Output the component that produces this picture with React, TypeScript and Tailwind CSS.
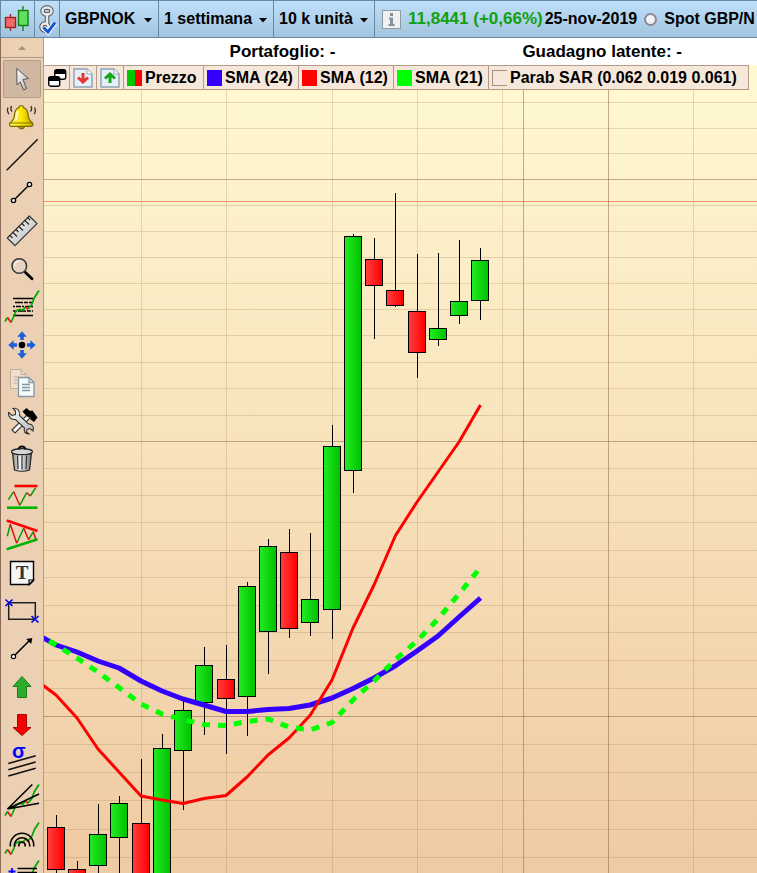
import React from "react";

type Candle = {
  x: number;
  high: number;
  top: number;
  bottom: number;
  low: number;
  up: boolean;
};

const candles: Candle[] = [
  { x: 56, high: 815, top: 827, bottom: 870, low: 900, up: false },
  { x: 77, high: 861, top: 869, bottom: 900, low: 910, up: false },
  { x: 98, high: 804, top: 834, bottom: 866, low: 890, up: true },
  { x: 119, high: 796, top: 803, bottom: 838, low: 890, up: true },
  { x: 141, high: 759, top: 823, bottom: 900, low: 910, up: false },
  { x: 162, high: 734, top: 748, bottom: 900, low: 910, up: true },
  { x: 183, high: 701, top: 710, bottom: 751, low: 810, up: true },
  { x: 204, high: 647, top: 665, bottom: 703, low: 735, up: true },
  { x: 226, high: 645, top: 679, bottom: 699, low: 754, up: false },
  { x: 247, high: 582, top: 586, bottom: 697, low: 736, up: true },
  { x: 268, high: 539, top: 546, bottom: 632, low: 674, up: true },
  { x: 289, high: 529, top: 552, bottom: 629, low: 638, up: false },
  { x: 310, high: 533, top: 599, bottom: 623, low: 636, up: true },
  { x: 332, high: 425, top: 446, bottom: 610, low: 639, up: true },
  { x: 353, high: 234, top: 236, bottom: 471, low: 493, up: true },
  { x: 374, high: 238, top: 259, bottom: 286, low: 339, up: false },
  { x: 395, high: 193, top: 290, bottom: 306, low: 307, up: false },
  { x: 417, high: 254, top: 311, bottom: 353, low: 378, up: false },
  { x: 438, high: 253, top: 328, bottom: 340, low: 346, up: true },
  { x: 459, high: 240, top: 301, bottom: 316, low: 324, up: true },
  { x: 480, high: 248, top: 260, bottom: 301, low: 320, up: true },
];

const sma24 =
  "40,636 56,645 77,652 98,661 119,668 141,681 162,691 183,699 204,705 226,711.5 247,711.5 268,709.5 289,708.5 310,705 332,698 353,688.5 374,678 395,666 417,651 438,636 459,617 480.5,598";
const sma12 =
  "40,683 56,695 77,718 98,749 119,772 141,796 162,800 183,803.5 204,798.5 226,795.5 247,777 268,755 289,738 310,715.5 332,680 353,628 374,585 395.5,535.5 417,502 438,472 459,442 480.5,405";
const sma21 =
  "44,638 56,645 77,658 98,672 119,687.5 141,704 162,714 183,719.5 204,724.5 226,725.5 247,721.5 268,719 289,727 310,730 332,722.5 353,700 374,681 395,660 417,641 438,619 459,594 480,568";

const minorRows = [
  102, 128, 153, 205, 231, 257, 283, 309, 335, 362, 388, 415, 468, 495, 522,
  550, 577, 605, 632, 660, 688, 744, 772, 800, 829, 857,
];
const majorRows = [179, 441, 716];
const minorCols = [141, 226, 332, 417, 502, 693];

function Chart() {
  return (
    <svg className="absolute inset-0 h-full w-full" role="img" aria-label="GBPNOK">
      <defs>
        <linearGradient id="up">
          <stop offset="0" stopColor="#22ea22" />
          <stop offset="1" stopColor="#00c200" />
        </linearGradient>
        <linearGradient id="down">
          <stop offset="0" stopColor="#ff3e3e" />
          <stop offset="1" stopColor="#ff0000" />
        </linearGradient>
      </defs>
      <g transform="translate(-44 -65)">
        <g shapeRendering="crispEdges">
          {minorRows.map((y) => (
            <rect key={y} x="44" y={y} width="100%" height="1" fill="#a07850" fillOpacity="0.25" />
          ))}
          {minorCols.map((x) => (
            <rect key={x} x={x} y="65" width="1" height="100%" fill="#a07850" fillOpacity="0.25" />
          ))}
          {majorRows.map((y) => (
            <rect key={y} x="44" y={y} width="100%" height="1" fill="#8c5f3c" fillOpacity="0.5" />
          ))}
          <rect x="608" y="65" width="1" height="100%" fill="#8c5f3c" fillOpacity="0.5" />
          <rect x="523" y="65" width="1" height="100%" fill="#ff3c32" fillOpacity="0.55" />
          <rect x="44" y="201" width="100%" height="1" fill="#ff3c32" fillOpacity="0.55" />
          {candles.map((c) => (
            <g key={c.x}>
              <rect x={c.x} y={c.high} width="1" height={c.low - c.high} fill="#000" />
              <rect x={c.x - 9} y={c.top} width="18" height={c.bottom - c.top} fill="#000" />
              <rect
                x={c.x - 8}
                y={c.top + 1}
                width="16"
                height={c.bottom - c.top - 2}
                fill={c.up ? "url(#up)" : "url(#down)"}
              />
            </g>
          ))}
        </g>
        <g fill="none" strokeLinejoin="round">
          <polyline points={sma24} stroke="#3300ff" strokeWidth="5" />
          <polyline points={sma12} stroke="#ff0000" strokeWidth="3" />
          <polyline points={sma21} stroke="#00ff00" strokeWidth="5" strokeDasharray="8 8" strokeDashoffset="-6" />
        </g>
      </g>
    </svg>
  );
}

function Zigzag() {
  return (
    <g fill="none" strokeWidth="1.7">
      <path d="M2 33.5 4.5 29.5M8 34.5 11 28 13 23 16.5 21.5 20 22 22.5 19M25 21 28.5 17 31.5 9.5 36 2.5" stroke="#00a800" />
      <path d="M4.5 29.5 8 34.5M22.5 18.5 25 21.5" stroke="#f01010" />
    </g>
  );
}

const tools: { label: string; icon: React.ReactNode }[] = [
  {
    label: "Puntatore",
    icon: (
      <path
        d="M13.7 8.5 25.5 18.5 20 19.5 23.5 28.5 20.5 30 17.3 22 14 25Z"
        fill="url(#steel)"
        stroke="#555"
        strokeWidth="1"
      />
    ),
  },
  {
    label: "Allarme",
    icon: (
      <>
        <path d="M15.5 28a3 3 0 0 0 6 0z" fill="#b39a00" stroke="#6b5a00" />
        <path
          d="M18.3 7.5c1.5 0 2 1 2 2 3 1 4.5 3.5 4.7 7 .3 4 1 6 4.5 8.5.8.8.8 3-1 3.3H8c-1.8-.3-1.8-2.5-1-3.3 3.5-2.5 4.3-4.5 4.5-8.5.2-3.5 1.8-6 4.8-7 0-1 .5-2 2-2z"
          fill="url(#gold)"
          stroke="#7a6800"
          strokeWidth="1.2"
        />
        <path d="M7 25h23" stroke="#8a7600" />
        <path d="M15 13c-1 2-1 6-2 9" stroke="#fffbd0" strokeWidth="2" fill="none" />
        <path
          d="M5 9.5Q3.5 13 6 16M8.5 8Q7 11 9 13.5M31.5 9.5Q33.5 13 31 16M28 8Q29.5 11 27.5 13.5"
          fill="none"
          stroke="#333"
          strokeWidth="1.3"
        />
      </>
    ),
  },
  { label: "Linea", icon: <path d="M3.7 34.3 34.7 3.3" stroke="#111" strokeWidth="1.4" /> },
  {
    label: "Segmento",
    icon: (
      <g stroke="#000" fill="#fff" strokeWidth="1.4">
        <path d="M10.5 26.5 26.5 10.5" />
        <circle cx="10.5" cy="26.5" r="2.1" />
        <circle cx="26.5" cy="10.5" r="2.1" />
      </g>
    ),
  },
  {
    label: "Righello",
    icon: (
      <>
        <path d="M26.3 4 34 11.7 12 33.7 4.3 26Z" fill="url(#steel)" stroke="#333" strokeWidth="1.2" strokeLinejoin="round" />
        <path
          d="M7 23.5l2.5 2.5M10 20.5l4 4M13 17.5l2.5 2.5M16 14.5l4 4M19 11.5l2.5 2.5M22 8.5l4 4M25 6l2.2 2.2"
          stroke="#222"
          strokeWidth="1.1"
        />
      </>
    ),
  },
  {
    label: "Zoom",
    icon: (
      <>
        <path d="M22.5 22.5 29 28.8" stroke="#000" strokeWidth="2.8" strokeLinecap="round" />
        <circle cx="16.3" cy="16" r="7.3" fill="#e6d3c0" stroke="#333" strokeWidth="1.5" />
        <path d="M11.5 15.5a5 5 0 0 1 5-4.5" stroke="#fff" strokeWidth="1.2" fill="none" />
      </>
    ),
  },
  {
    label: "Livelli",
    icon: (
      <>
        <path d="M10 10.5H30M10 27.5H30" stroke="#000" strokeWidth="1.6" />
        <path d="M12 14.5H30" stroke="#000" strokeWidth="1.6" strokeDasharray="8 1 4 1" />
        <path d="M10 18.5H30" stroke="#000" strokeWidth="1.6" strokeDasharray="2 1 5 1" />
        <path d="M10 23H30" stroke="#000" strokeWidth="1.6" strokeDasharray="4 1 8 1" />
        <Zigzag />
      </>
    ),
  },
  {
    label: "Sposta",
    icon: (
      <>
        <circle cx="19" cy="19" r="3.3" fill="#000" />
        <path
          d="M19 5.3 23.7 10.7H20.8V14H17.2V10.7H14.3ZM19 32.7 23.7 27.3H20.8V24H17.2V27.3H14.3ZM5.3 19 10.7 14.3V17.2H14V20.8H10.7V23.7ZM32.7 19 27.3 14.3V17.2H24V20.8H27.3V23.7Z"
          fill="#1a5fd8"
        />
      </>
    ),
  },
  {
    label: "Copia",
    icon: (
      <>
        <path d="M7.5 5.5H18L23 10.5V24.5H7.5Z" fill="#f1dfcc" stroke="#bfae9e" />
        <path d="M18 5.5V10.5H23M10.5 13h6M10.5 16h4M10.5 19h4" stroke="#bfae9e" fill="none" />
        <path d="M15.5 13.5H26L31 18.5V32.5H15.5Z" fill="#f7fafc" stroke="#8496a2" strokeWidth="1.3" />
        <path d="M26 13.5V18.5H31M19 20.5h8M19 23.5h8M19 26.5h8" stroke="#8496a2" strokeWidth="1.3" fill="none" />
      </>
    ),
  },
  {
    label: "Strumenti",
    icon: (
      <>
        <path d="M9 28 24 13 27 16 12 31Z" fill="#fff" stroke="#333" strokeWidth="1.1" />
        <path d="M19.5 9.5 23.5 6 27 9 29.5 8.5 34.5 15.5 31 20 27.5 17.5 27 15 24 14.5Z" fill="#000" />
        <path
          d="M5.5 10.5 9 13.5 12.5 12.5 12.5 9 10 6.5C14 5.5 17.5 9 16.5 13.5L25.5 22C29 21.5 31.5 25 30 29L27 26.5 24 27.5 23.5 30 26 32C21.5 32 20.5 29 21.5 26L12.5 17.5C8.500 18 5 15 5.5 10.5Z"
          fill="url(#steel)"
          stroke="#333"
          strokeWidth="1.1"
        />
      </>
    ),
  },
  {
    label: "Elimina",
    icon: (
      <>
        <path d="M9.5 13 11.5 30Q19 32.5 26.5 30L28.5 13Z" fill="url(#metal)" stroke="#222" strokeWidth="1.2" />
        <path d="M14.5 15.5 15 29M19 15.5V29.5M23.5 15.5 23 29" stroke="#333" strokeWidth="1.2" />
        <ellipse cx="19" cy="11.7" rx="10.5" ry="3" fill="#d6d6d6" stroke="#222" strokeWidth="1.2" />
        <path d="M15.5 9.5Q16 6.5 19 6.5T22.5 9.5" fill="none" stroke="#111" strokeWidth="2" />
      </>
    ),
  },
  {
    label: "Canale orizzontale",
    icon: (
      <g fill="none" strokeWidth="1.5">
        <path d="M11.5 8H34.5" stroke="#f00" strokeWidth="2.6" />
        <path d="M4 29.7H34.5" stroke="#00b400" strokeWidth="2.6" />
        <path d="M5.3 21.7 10.7 13.7M16.7 27.3 23.7 14.7M27.3 18 32.7 9.7" stroke="#00a000" />
        <path d="M10.7 13.7 16.7 27.3M23.7 14.7 27.3 18" stroke="#e01010" />
      </g>
    ),
  },
  {
    label: "Triangolo",
    icon: (
      <g fill="none" strokeWidth="1.5">
        <path d="M3.7 4.5 34.5 15" stroke="#f00" strokeWidth="2.6" />
        <path d="M3.7 33.3 34.5 23.3" stroke="#00b400" strokeWidth="2.6" />
        <path d="M4.3 20.3 7.3 8.3M13.7 27.3 20.7 12.3M25.7 23.7 30.3 15.7" stroke="#00a000" />
        <path d="M7.3 8.3 13.7 27.3M20.7 12.3 25.7 23.7M30.3 15.7 32.7 23" stroke="#e01010" />
      </g>
    ),
  },
  {
    label: "Testo",
    icon: (
      <>
        <path d="M7.5 7.5H30.5V26.5L26.5 30.5H7.5Z" fill="#f6f6f6" stroke="#000" strokeWidth="1.4" />
        <path d="M26 30.5V26H30.5Z" fill="#fff" stroke="#000" strokeWidth="1.2" />
        <text x="19" y="25" textAnchor="middle" fontFamily="Liberation Serif, serif" fontWeight="bold" fontSize="19" fill="#333">
          T
        </text>
      </>
    ),
  },
  {
    label: "Rettangolo",
    icon: (
      <>
        <path d="M5.7 10.7H32.3V27.3H5.7Z" fill="none" stroke="#222" strokeWidth="1.5" />
        <path d="M2.5 7.5 9.5 14M9.5 7.5 2.5 14M28.5 24 35.5 30.5M35.5 24 28.5 30.5" stroke="#0000f0" strokeWidth="1.7" />
      </>
    ),
  },
  {
    label: "Freccia",
    icon: (
      <>
        <path d="M10.5 26.5 27 10" stroke="#000" strokeWidth="1.6" />
        <path d="M29.3 8 28.2 14 23.2 9Z" fill="#000" />
        <circle cx="10.5" cy="26.5" r="2.1" fill="#fff" stroke="#000" strokeWidth="1.2" />
      </>
    ),
  },
  {
    label: "Freccia su",
    icon: <path d="M19 8.5 28 18.5H23.5V29.5H14.5V18.5H10Z" fill="#2cae2c" stroke="#1a7a1a" />,
  },
  {
    label: "Freccia giù",
    icon: <path d="M14.5 8.5H23.5V21.5H28L19 29.5 10 21.5H14.5Z" fill="#f50000" stroke="#b00000" />,
  },
  {
    label: "Deviazione",
    icon: (
      <>
        <text x="9" y="14" fontFamily="Liberation Sans, sans-serif" fontWeight="bold" fontSize="20" fill="#0000ff">
          σ
        </text>
        <path d="M5.3 19.5 32.7 11.7M5.3 25.7 32.7 18M5.3 32 32.7 24.3" stroke="#111" strokeWidth="1.6" />
      </>
    ),
  },
  {
    label: "Ventaglio",
    icon: (
      <>
        <Zigzag />
        <path d="M29.3 2.5 4.5 27 36 12M4.5 27 36 21.3" fill="none" stroke="#000" strokeWidth="1.6" />
      </>
    ),
  },
  {
    label: "Archi",
    icon: (
      <>
        <Zigzag />
        <path
          d="M7.3 26.5V25a11.7 11.7 0 0 1 23.4 0V26.5M11.3 26.5V25.5a7.7 7.7 0 0 1 15.4 0V26.5M15.8 26.5V25.5a3.2 3.2 0 0 1 6.4 0V26.5"
          fill="none"
          stroke="#000"
          strokeWidth="1.6"
        />
      </>
    ),
  },
  {
    label: "Ritracciamenti",
    icon: (
      <>
        <Zigzag />
        <path d="M14.5 10.5H34M14.5 14.5H34M5 20H34" stroke="#000" strokeWidth="1.6" />
        <path d="M5.5 13.5H12.5M9 10V17" stroke="#00f" strokeWidth="1.8" />
      </>
    ),
  },
];

function Sidebar() {
  return (
    <aside className="flex w-11 shrink-0 flex-col overflow-hidden border-r border-l border-r-[#b49a88] border-l-[#8c6a5a] bg-[#ecd0b4]">
      <svg className="absolute h-0 w-0" aria-hidden="true">
        <defs>
          <linearGradient id="steel" x1="0" y1="0" x2="1" y2="1">
            <stop offset="0" stopColor="#fff" />
            <stop offset="1" stopColor="#b4b4b4" />
          </linearGradient>
          <linearGradient id="metal">
            <stop offset="0" stopColor="#8a8a8a" />
            <stop offset="0.4" stopColor="#f2f2f2" />
            <stop offset="1" stopColor="#777" />
          </linearGradient>
          <linearGradient id="gold">
            <stop offset="0" stopColor="#fff36a" />
            <stop offset="0.5" stopColor="#ffe800" />
            <stop offset="1" stopColor="#c4a800" />
          </linearGradient>
        </defs>
      </svg>
      <button aria-label="Scorri su" className="flex h-5 shrink-0 items-center justify-center border-b border-[#b49a88]">
        <svg width="8" height="4" viewBox="0 0 8 4">
          <path d="M0 4 4 0 8 4Z" fill="#a89080" />
        </svg>
      </button>
      <nav className="flex flex-col items-center pt-0.5">
        {tools.map((tool, index) => (
          <button
            key={tool.label}
            aria-label={tool.label}
            className={
              index === 0
                ? "h-[38px] w-[38px] shrink-0 rounded-xs bg-[#cfb8a2] ring-1 ring-[#b39c88] ring-inset"
                : "h-[38px] w-[38px] shrink-0"
            }
          >
            <svg width="38" height="38" viewBox="0 0 38 38" className="overflow-visible">
              {tool.icon}
            </svg>
          </button>
        ))}
      </nav>
    </aside>
  );
}

function Dropdown({ label, value, className }: { label: string; value: string; className: string }) {
  return (
    <div className={`relative shrink-0 border-r border-[#6688a3] ${className}`}>
      <select aria-label={label} className="h-full w-full appearance-none bg-transparent pl-[5px] outline-none">
        <option>{value}</option>
      </select>
      <svg className="pointer-events-none absolute top-[17px] right-1.5" width="8" height="5" viewBox="0 0 8 5">
        <path d="M0 0H8L4 4.5Z" fill="#000" />
      </svg>
    </div>
  );
}

function Header() {
  return (
    <header className="flex h-[38px] shrink-0 overflow-hidden border-y border-l border-[#6688a3] bg-linear-to-b from-[#bfe0fa] to-[#a2c4de] whitespace-nowrap">
      <button aria-label="Grafico" className="w-[34px] shrink-0 border-r border-[#6688a3]">
        <svg width="33" height="36" viewBox="1 1 33 36">
          <path d="M10.5 14V31" stroke="#a02020" strokeWidth="1.4" />
          <rect x="5.5" y="17.5" width="10" height="10" fill="#ec6a6a" stroke="#a02020" strokeWidth="1.4" />
          <path d="M23 6V31" stroke="#108010" strokeWidth="1.4" />
          <rect x="18.5" y="10.5" width="9.5" height="15" fill="#5fe05f" stroke="#108010" strokeWidth="1.4" />
        </svg>
      </button>
      <button aria-label="Collega" className="w-[25px] shrink-0 border-r border-[#6688a3]">
        <svg width="24" height="36" viewBox="35 1 24 36" fill="none">
          <g stroke="#555" strokeWidth="4.5">
            <ellipse cx="47" cy="11" rx="4.5" ry="3.5" />
            <ellipse cx="45" cy="27" rx="3.5" ry="3.5" />
            <path d="M47 14V24" strokeLinecap="round" />
          </g>
          <g stroke="#e8e8e8" strokeWidth="2.5">
            <ellipse cx="47" cy="11" rx="4.5" ry="3.5" />
            <ellipse cx="45" cy="27" rx="3.5" ry="3.5" />
            <path d="M47 14V24" strokeLinecap="round" />
          </g>
          <path d="M43.5 27.5 48 32 55 22.5" stroke="#fff" strokeWidth="5" />
          <path d="M43.5 27.5 48 32 55 22.5" stroke="#1458d8" strokeWidth="3" />
        </svg>
      </button>
      <Dropdown label="Strumento" value="GBPNOK" className="w-[99px]" />
      <Dropdown label="Periodo" value="1 settimana" className="w-[115px]" />
      <Dropdown label="Unità" value="10 k unità" className="w-[101px]" />
      <div className="flex items-center pl-[7px]">
        <button aria-label="Informazioni" className="mr-[7px] shrink-0">
          <svg width="19" height="19" viewBox="0 0 19 19">
            <rect x="0.5" y="0.5" width="18" height="18" fill="#eef0f2" stroke="#8e9aa4" />
            <path d="M7 7.5H11V14H12.5V16H6.5V14H8V9.5H7Z" fill="#85919c" />
            <rect x="8" y="3" width="3" height="3" fill="#85919c" />
          </svg>
        </button>
        <span className="text-[17px] text-[#10a010]">11,8441 (+0,66%)</span>
        <span className="ml-0.5">25-nov-2019</span>
        <input
          type="radio"
          aria-label="Spot"
          className="mx-[7px] h-[13px] w-[13px] shrink-0 appearance-none rounded-full border-2 border-[#8a8a92] bg-[#eef2f6]"
        />
        <span>Spot GBP/N</span>
      </div>
    </header>
  );
}

const indicators = [
  { label: "Prezzo", cell: "w-20", swatch: "bg-linear-to-r from-[#00c800] from-50% to-[#ff0000] to-50%" },
  { label: "SMA (24)", cell: "w-[95px]", swatch: "bg-[#3300ff]" },
  { label: "SMA (12)", cell: "w-[95px]", swatch: "bg-[#ff0000]" },
  { label: "SMA (21)", cell: "w-[95px]", swatch: "bg-[#00ff00]" },
  {
    label: "Parab SAR (0.062 0.019 0.061)",
    cell: "w-[260px]",
    swatch: "border-y border-l border-[#a89080]",
  },
];

function PageIcon({ arrow, color }: { arrow: string; color: string }) {
  return (
    <svg width="20" height="20" viewBox="0 0 20 20">
      <path d="M1 1H14L19 6V19H1Z" fill="#e6eff6" stroke="#8fa5b8" strokeWidth="1.5" />
      <path d="M14 1V6H19" fill="#fff" stroke="#8fa5b8" />
      <path d={arrow} fill="none" stroke={color} strokeWidth="3" />
    </svg>
  );
}

function Legend() {
  const cell = "flex h-full shrink-0 items-center border-r border-[#b49a88]";
  return (
    <div className="relative flex h-[25px] w-fit border-y border-[#b49a88] bg-[#f5e7da] whitespace-nowrap">
      <button aria-label="Finestre" className={`${cell} w-[26px] justify-center`}>
        <svg width="20" height="20" viewBox="0 0 20 20">
          <rect x="7.7" y="1.7" width="11" height="9.5" rx="2" fill="#fff" stroke="#000" strokeWidth="1.4" />
          <path d="M7.7 2H18.7V6H7.7Z" fill="#000" />
          <rect x="1.7" y="8.7" width="11" height="9.5" rx="2" fill="#fff" stroke="#000" strokeWidth="1.4" />
          <path d="M1.7 9H12.7V13H1.7Z" fill="#000" />
        </svg>
      </button>
      <button aria-label="Sotto" className={`${cell} w-[27px] justify-center`}>
        <PageIcon arrow="M10 5V14M5 9.5 10 14 15 9.5" color="#e83434" />
      </button>
      <button aria-label="Sopra" className={`${cell} w-[27px] justify-center`}>
        <PageIcon arrow="M10 15V6M5 10.5 10 6 15 10.5" color="#14a814" />
      </button>
      {indicators.map((item) => (
        <button key={item.label} className={`${cell} ${item.cell} gap-[3px] pl-[3px]`}>
          <span className={`h-4 w-[15px] shrink-0 ${item.swatch}`} />
          {item.label}
        </button>
      ))}
    </div>
  );
}

export default function App() {
  return (
    <div className="flex h-screen flex-col overflow-hidden bg-white font-['Liberation_Sans',Arial,sans-serif] text-base font-bold text-black">
      <Header />
      <div className="flex min-h-0 flex-1">
        <Sidebar />
        <main className="flex min-w-0 flex-1 flex-col">
          <div className="flex h-[27px] shrink-0 items-center justify-end gap-[187px] pr-[75px] text-[17px]">
            <span>Portafoglio: -</span>
            <span>Guadagno latente: -</span>
          </div>
          <section className="relative min-h-0 flex-1 overflow-hidden bg-linear-to-b from-[#fff9d2] to-[#efcaa2]">
            <Chart />
            <Legend />
          </section>
        </main>
      </div>
    </div>
  );
}
